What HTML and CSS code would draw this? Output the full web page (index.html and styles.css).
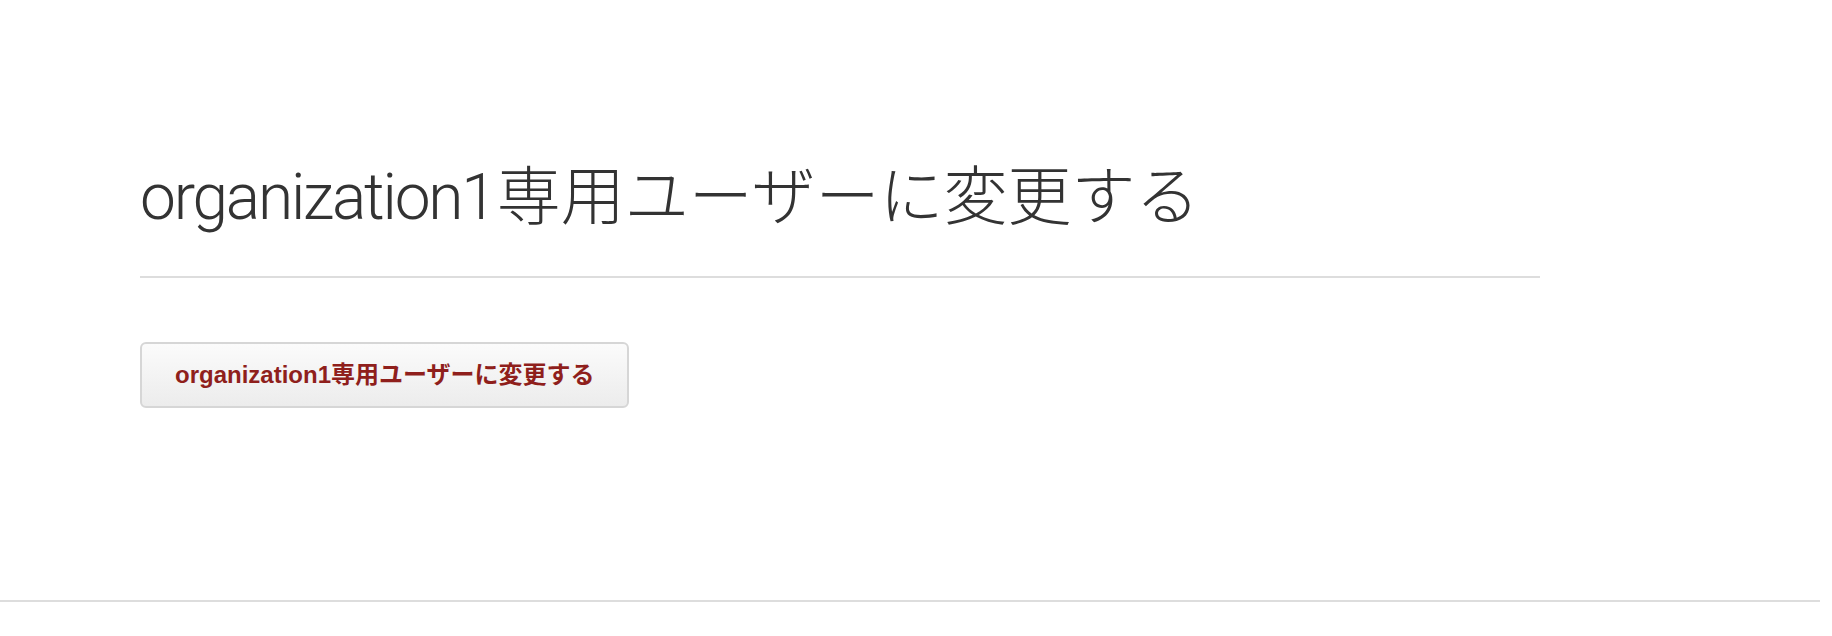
FILE: index.html
```html
<!DOCTYPE html>
<html lang="ja">
<head>
<meta charset="utf-8">
<title>organization1専用ユーザーに変更する</title>
<link rel="stylesheet" href="styles.css">
</head>
<body>
<main class="page">
  <h1 class="title"><span class="title-latin">organization1</span>専用ユーザーに変更する</h1>
  <hr class="rule">
  <form class="actions">
    <button type="button" class="btn">organization1専用ユーザーに変更する</button>
  </form>
</main>
<footer class="footer"></footer>
</body>
</html>
```

FILE: styles.css
```css
html, body {
  margin: 0;
  padding: 0;
  background: #ffffff;
}
body {
  font-family: "Liberation Sans", Arial, "Noto Sans CJK JP", sans-serif;
  color: #333333;
}
.page {
  padding: 157px 0 0 140px;
  width: 1400px;
  height: 443px;
}
.title {
  margin: 0;
  font-family: "Liberation Sans", Arial, "Noto Sans CJK JP", sans-serif;
  font-size: 64px;
  font-weight: 300;
  line-height: 80px;
  color: #333333;
}
.title-latin {
  font-family: Roboto, "Liberation Sans", Arial, sans-serif;
  font-weight: 300;
  letter-spacing: -2.2px;
  margin-right: 2px;
}
.rule {
  margin: 38px 0 0 0;
  border: 0;
  height: 2px;
  background: #dddddd;
}
.actions {
  margin: 64px 0 0 0;
}
.btn {
  display: inline-block;
  margin: 0;
  padding: 16px 32px 16px 33px;
  font-family: "Liberation Sans", Arial, "Noto Sans CJK JP", sans-serif;
  font-size: 24px;
  font-weight: 700;
  line-height: 30px;
  color: #8f1f1c;
  background: linear-gradient(#fbfbfb, #ececec);
  border: 2px solid #d6d6d6;
  border-radius: 6px;
}
.footer {
  width: calc(100% - 12px);
  height: 0;
  border-top: 2px solid #dddddd;
}
```
